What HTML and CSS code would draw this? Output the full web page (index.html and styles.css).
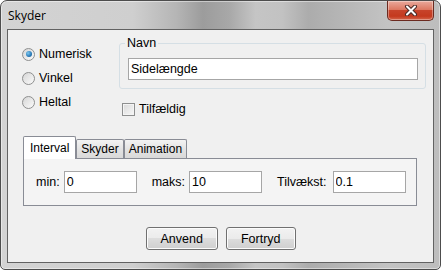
FILE: index.html
```html
<!DOCTYPE html>
<html lang="da">
<head>
  <meta charset="UTF-8" />
  <title>Skyder</title>
  <link rel="stylesheet" href="styles.css">
</head>
<body>

  <div class="window">
    <div class="titlebar">
      <span class="title">Skyder</span>
      <button class="close" aria-label="Luk">
        <svg width="14" height="11" viewBox="0 0 14 11">
          <path d="M3 1.5 L11 9.5 M11 1.5 L3 9.5" stroke="#4a2a26" stroke-width="4" stroke-linecap="round" fill="none"/>
          <path d="M3 1.5 L11 9.5 M11 1.5 L3 9.5" stroke="#ffffff" stroke-width="2" stroke-linecap="round" fill="none"/>
        </svg>
      </button>
    </div>

    <div class="content">
      <div class="top">
        <!-- Slider type -->
        <div class="types">
          <label class="radio-row"><span class="radio checked"></span>Numerisk</label>
          <label class="radio-row"><span class="radio"></span>Vinkel</label>
          <label class="radio-row"><span class="radio"></span>Heltal</label>
        </div>

        <div class="name-col">
          <fieldset class="name-box">
            <legend>Navn</legend>
            <input type="text" class="field wide" value="Sidelængde" />
          </fieldset>
          <label class="check-row"><span class="checkbox"></span>Tilfældig</label>
        </div>
      </div>

      <!-- Tabs -->
      <div class="tabs">
        <div class="tab-strip">
          <span class="tab active">Interval</span>
          <span class="tab">Skyder</span>
          <span class="tab">Animation</span>
        </div>
        <div class="tab-panel">
          <div class="param"><label>min:</label><input type="text" class="field small" value="0" /></div>
          <div class="param"><label>maks:</label><input type="text" class="field small" value="10" /></div>
          <div class="param"><label class="incr">Tilvækst:</label><input type="text" class="field small" value="0.1" /></div>
        </div>
      </div>

      <div class="actions">
        <button class="btn">Anvend</button>
        <button class="btn">Fortryd</button>
      </div>
    </div>
  </div>

</body>
</html>
```

FILE: styles.css
```css
* {
  box-sizing: border-box;
}

body {
  margin: 0;
  font-family: "Liberation Sans", Arial, sans-serif;
  font-size: 12.5px;
  color: #000;
}

.window {
  width: 441px;
  height: 270px;
  border: 1px solid #4d4d4d;
  border-radius: 7px 7px 5px 5px;
  padding: 0 6px 6px;
  display: flex;
  flex-direction: column;
  background: linear-gradient(to right, #d3d3d3 0, #cfcfcf 30%, #b5b5b5 40%, #9c9c9c 46%, #a8a8a8 52%, #c5c5c5 58%, #c2c2c2 64%, #acacac 70%, #b6b6b6 78%, #c3c3c3 88%, #bdbdbd 100%);
  box-shadow: inset 0 0 0 1px rgba(255, 255, 255, 0.45);
}

.titlebar {
  height: 28px;
  display: flex;
  justify-content: space-between;
  align-items: flex-start;
}

.title {
  font-family: "Open Sans", sans-serif;
  font-size: 12px;
  line-height: 16px;
  margin: 7px 0 0 1px;
}

.close {
  width: 47px;
  height: 20px;
  padding: 0;
  border: 1px solid #6b2a20;
  border-top: none;
  border-radius: 0 0 5px 5px;
  background: linear-gradient(#e9a99c, #dc7862 45%, #c7432a 50%, #c4391e 80%, #d4664c);
  box-shadow: inset 0 0 0 1px rgba(255, 255, 255, 0.35);
  display: flex;
  align-items: center;
  justify-content: center;
}

.content {
  flex: 1;
  border: 1px solid #626262;
  background: #f0f0f0;
  padding: 6px 7px 0 14px;
  display: flex;
  flex-direction: column;
}

.top {
  display: flex;
}

.types {
  width: 97px;
  flex-shrink: 0;
  padding-top: 6px;
  display: flex;
  flex-direction: column;
}

.radio-row {
  height: 24px;
  display: flex;
  align-items: center;
}

.radio {
  width: 13px;
  height: 13px;
  margin-right: 4px;
  border: 1px solid #8e8f8f;
  border-radius: 50%;
  background: linear-gradient(135deg, #d6d6d6, #fbfbfb);
  display: flex;
  align-items: center;
  justify-content: center;
}

.radio.checked::after {
  content: "";
  width: 6px;
  height: 6px;
  border-radius: 50%;
  background: radial-gradient(circle at 35% 35%, #7cc8f0, #2a7ab8 60%, #17507f);
}

.name-col {
  width: 307px;
  flex-shrink: 0;
}

.name-box {
  margin: 0;
  padding: 8px 7px 8px 8px;
  border: 1px solid #d5dfe5;
  border-radius: 3px;
}

.name-box legend {
  padding: 0 2px;
  margin-left: -3px;
  line-height: 14px;
}

.check-row {
  height: 20px;
  margin: 10px 0 0 3px;
  display: flex;
  align-items: center;
}

.checkbox {
  width: 13px;
  height: 13px;
  margin-right: 4px;
  border: 1px solid #8e8f8f;
  background: linear-gradient(135deg, #d9d9d9, #f8f8f8);
  box-shadow: inset 0 0 0 1px #f4f4f4;
}

.field {
  height: 22px;
  padding: 0 2px;
  border: 1px solid #a6a6a6;
  background: #fff;
  font-family: "Liberation Sans", Arial, sans-serif;
  font-size: 12.5px;
  color: #000;
}

.wide {
  width: 100%;
}

.small {
  width: 73px;
}

.tabs {
  margin-top: 17px;
  margin-left: 1px;
}

.tab-strip {
  height: 22px;
  display: flex;
  align-items: flex-end;
}

.tab {
  height: 19px;
  padding: 0 4px;
  border: 1px solid #898c95;
  border-bottom: none;
  border-radius: 2px 2px 0 0;
  background: linear-gradient(#f3f3f3, #e3e3e3 50%, #d9d9d9);
  font-size: 12px;
  display: flex;
  align-items: center;
}

.tab.active {
  position: relative;
  z-index: 1;
  height: 23px;
  margin-bottom: -1px;
  padding: 0 6px 1px;
  background: #fff;
}

.tab-panel {
  width: 394px;
  padding: 12px;
  border: 1px solid #898c95;
  background: #f4f4f4;
  display: flex;
  align-items: center;
}

.param {
  display: flex;
  align-items: center;
}

.param + .param {
  margin-left: 15px;
}

.param label {
  margin-right: 4px;
}

.param .incr {
  margin-right: 6px;
}

.actions {
  margin: 21px -7px 0 -14px;
  display: flex;
  justify-content: center;
  gap: 8px;
}

.btn {
  height: 23px;
  padding: 0 14px;
  border: 1px solid #707070;
  border-radius: 3px;
  background: linear-gradient(#f2f2f2 0, #ebebeb 50%, #dddddd 50%, #cfcfcf 100%);
  box-shadow: inset 0 0 0 1px #fcfcfc;
  font-family: "Liberation Sans", Arial, sans-serif;
  font-size: 12.5px;
  color: #000;
}
```
